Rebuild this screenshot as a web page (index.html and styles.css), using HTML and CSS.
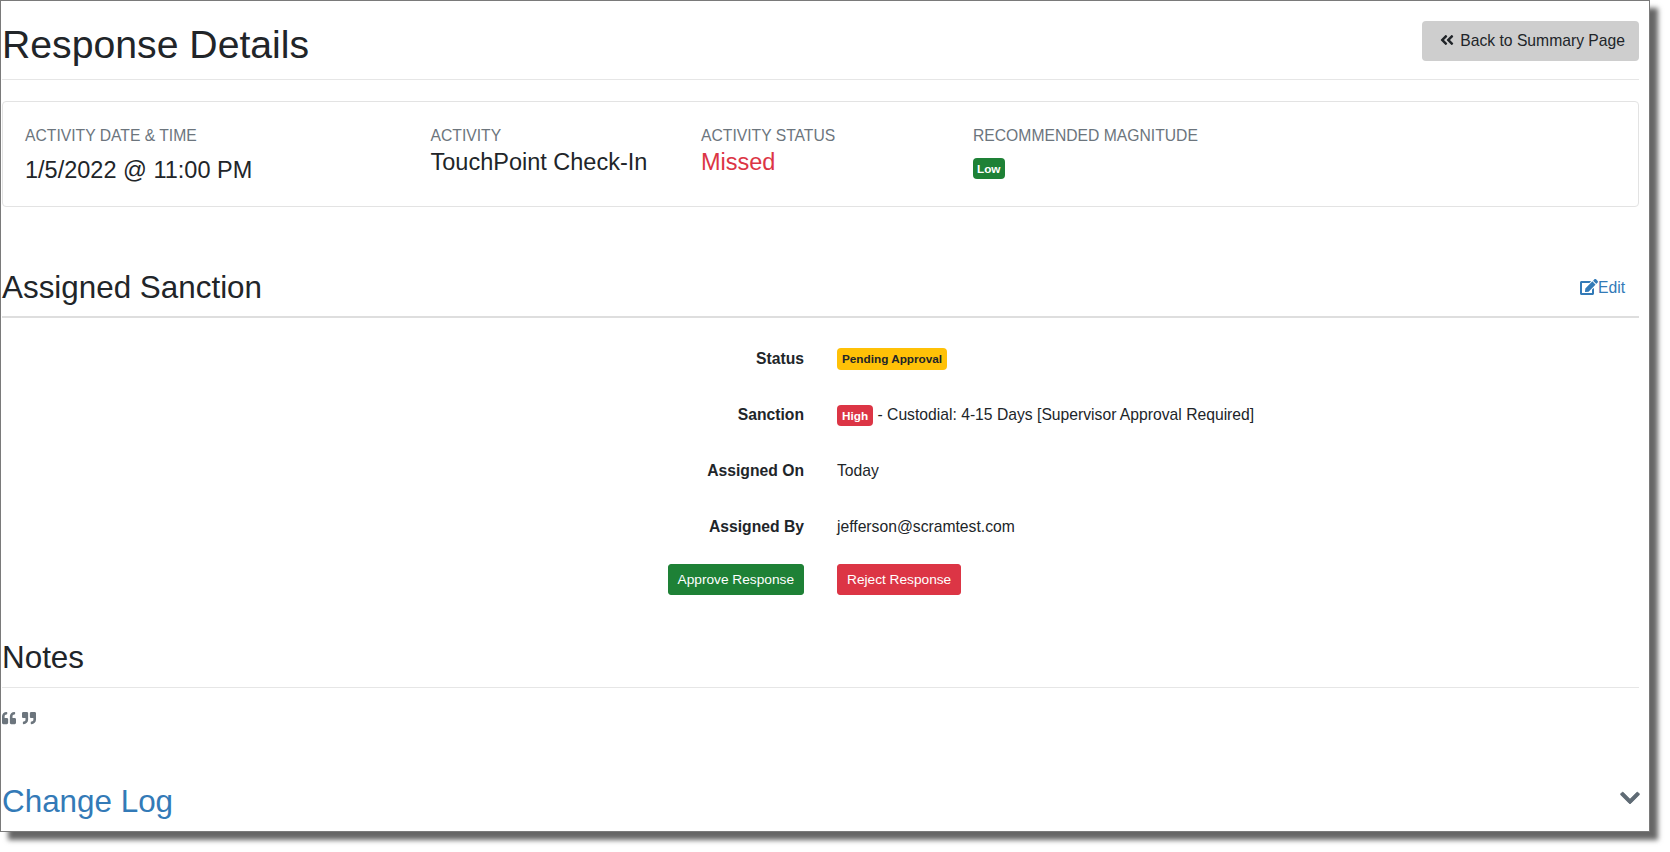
FILE: index.html

```html
<!DOCTYPE html>
<html lang="en">
<head>
  <meta charset="UTF-8">
  <title>Response Details</title>
  <link rel="stylesheet" href="styles.css">
</head>
<body>
  <div class="frame">

    <!-- Header -->
    <div class="page-header">
      <h1>Response Details</h1>
      <a class="btn btn-back" href="#">
        <svg class="icon-back" viewBox="0 0 448 512"><path d="M223.7 239l136-136c9.4-9.4 24.6-9.4 33.9 0l22.6 22.6c9.4 9.4 9.4 24.6 0 33.9L319.9 256l96.4 96.4c9.4 9.4 9.4 24.6 0 33.9L393.7 409c-9.4 9.4-24.6 9.4-33.9 0l-136-136c-9.5-9.4-9.5-24.6-.1-34zm-192 34l136 136c9.4 9.4 24.6 9.4 33.9 0l22.6-22.6c9.4-9.4 9.4-24.6 0-33.9L127.9 256l96.4-96.4c9.4-9.4 9.4-24.6 0-33.9L201.7 103c-9.4-9.4-24.6-9.4-33.9 0l-136 136c-9.5 9.4-9.5 24.6-.1 34z"/></svg>
        Back to Summary Page
      </a>
    </div>

    <!-- Activity summary -->
    <div class="summary-card">
      <div class="summary-col col-date">
        <div class="summary-label">Activity Date &amp; Time</div>
        <div class="summary-value value-date">1/5/2022 @ 11:00 PM</div>
      </div>
      <div class="summary-col col-activity">
        <div class="summary-label">Activity</div>
        <div class="summary-value">TouchPoint Check-In</div>
      </div>
      <div class="summary-col col-status">
        <div class="summary-label">Activity Status</div>
        <div class="summary-value text-danger">Missed</div>
      </div>
      <div class="summary-col">
        <div class="summary-label">Recommended Magnitude</div>
        <span class="badge badge-success badge-low">Low</span>
      </div>
    </div>

    <!-- Assigned sanction -->
    <div class="section-header section-sanction">
      <h2>Assigned Sanction</h2>
      <a class="edit-link" href="#">
        <svg class="icon-edit" viewBox="0 0 576 512"><path d="M402.6 83.2l90.2 90.2c3.8 3.8 3.8 10 0 13.8L274.4 405.6l-92.8 10.3c-12.4 1.4-22.9-9.1-21.5-21.5l10.3-92.8L388.8 83.2c3.8-3.8 10-3.8 13.8 0zm162-22.9l-48.8-48.8c-15.2-15.2-39.9-15.2-55.2 0l-35.4 35.4c-3.8 3.8-3.8 10 0 13.8l90.2 90.2c3.8 3.8 10 3.8 13.8 0l35.4-35.4c15.2-15.3 15.2-40 0-55.2zM384 346.2V448H64V128h229.8c3.2 0 6.2-1.3 8.5-3.5l40-40c7.6-7.6 2.2-20.5-8.5-20.5H48C21.5 64 0 85.5 0 112v352c0 26.5 21.5 48 48 48h352c26.5 0 48-21.5 48-48V306.2c0-10.7-12.9-16-20.5-8.5l-40 40c-2.2 2.3-3.5 5.3-3.5 8.5z"/></svg>Edit
      </a>
    </div>

    <div class="details">
      <div class="detail-label">Status</div>
      <div class="detail-value"><span class="badge badge-warning">Pending Approval</span></div>
      <div class="detail-label">Sanction</div>
      <div class="detail-value"><span class="badge badge-danger">High</span> - Custodial: 4-15 Days [Supervisor Approval Required]</div>
      <div class="detail-label">Assigned On</div>
      <div class="detail-value">Today</div>
      <div class="detail-label">Assigned By</div>
      <div class="detail-value">jefferson@scramtest.com</div>
      <div class="detail-action"><a class="btn btn-success" href="#">Approve Response</a></div>
      <div class="detail-action-right"><a class="btn btn-danger" href="#">Reject Response</a></div>
    </div>

    <!-- Notes -->
    <div class="section-header section-notes">
      <h2>Notes</h2>
    </div>
    <div class="notes-body">
      <svg class="icon-quote" viewBox="0 0 512 512"><path d="M464 256h-80v-64c0-35.3 28.7-64 64-64h8c13.3 0 24-10.7 24-24V56c0-13.3-10.7-24-24-24h-8c-88.4 0-160 71.6-160 160v240c0 26.5 21.5 48 48 48h128c26.5 0 48-21.5 48-48V304c0-26.5-21.5-48-48-48zm-288 0H96v-64c0-35.3 28.7-64 64-64h8c13.3 0 24-10.7 24-24V56c0-13.3-10.7-24-24-24h-8C71.6 32 0 103.6 0 192v240c0 26.5 21.5 48 48 48h128c26.5 0 48-21.5 48-48V304c0-26.5-21.5-48-48-48z"/></svg>
      <svg class="icon-quote" viewBox="0 0 512 512"><path d="M464 32H336c-26.5 0-48 21.5-48 48v128c0 26.5 21.5 48 48 48h80v64c0 35.3-28.7 64-64 64h-8c-13.3 0-24 10.7-24 24v48c0 13.3 10.7 24 24 24h8c88.4 0 160-71.6 160-160V80c0-26.5-21.5-48-48-48zm-288 0H48C21.5 32 0 53.5 0 80v128c0 26.5 21.5 48 48 48h80v64c0 35.3-28.7 64-64 64h-8c-13.3 0-24 10.7-24 24v48c0 13.3 10.7 24 24 24h8c88.4 0 160-71.6 160-160V80c0-26.5-21.5-48-48-48z"/></svg>
    </div>

    <!-- Change log -->
    <div class="changelog">
      <a class="changelog-link" href="#">Change Log</a>
      <svg class="icon-chevron" viewBox="0 0 448 512"><path d="M207.029 381.476L12.686 187.132c-9.373-9.373-9.373-24.569 0-33.941l22.667-22.667c9.357-9.357 24.522-9.375 33.901-.04L224 284.505l154.745-154.021c9.379-9.335 24.544-9.317 33.901.04l22.667 22.667c9.373 9.373 9.373 24.569 0 33.941L240.971 381.476c-9.373 9.372-24.569 9.372-33.942 0z"/></svg>
    </div>

  </div>
</body>
</html>
```

FILE: styles.css

```css
html, body {
  height: 852px;
}

body {
  font-family: "Liberation Sans", Arial, sans-serif;
  font-size: 15.7px;
  line-height: 24px;
  color: #212529;
  background: #fff;
  margin: 0;
  padding: 0;
  overflow: hidden;
}

a {
  text-decoration: none;
}

h1, h2 {
  margin: 0;
  font-weight: 400;
}

h1 {
  font-size: 39.2px;
  line-height: 48px;
}

h2 {
  font-size: 31.4px;
  line-height: 38px;
}

.frame {
  box-sizing: border-box;
  width: 1650px;
  height: 832px;
  border: 1px solid #7a7a7a;
  padding: 0 10px 0 1px;
  background: #fff;
  box-shadow: 8px 8px 5px rgba(0,0,0,0.6);
}

.page-header {
  display: flex;
  justify-content: space-between;
  align-items: flex-start;
  padding-top: 20px;
  height: 79px;
  box-sizing: border-box;
  border-bottom: 1px solid #e6e6e6;
}

.btn {
  display: inline-block;
  border-radius: 3px;
  font-size: 13.7px;
  line-height: 19px;
  padding: 5px 9px;
  color: #fff;
}

.btn-back {
  background: #cecece;
  color: #212529;
  font-size: 15.7px;
  line-height: 24px;
  padding: 8px 14px 8px 18px;
  border-radius: 4px;
}

.icon-back {
  width: 14px;
  height: 16px;
  fill: #212529;
  vertical-align: -2px;
  margin-right: 2px;
}

.btn-success {
  background: #1e8136;
  border: 1px solid #1e8136;
}

.btn-danger {
  background: #dc3545;
  border: 1px solid #dc3545;
}

.summary-card {
  display: flex;
  box-sizing: border-box;
  height: 106px;
  margin-top: 21px;
  padding: 22px 22px 0;
  border: 1px solid #e3e3e3;
  border-radius: 4px;
}

.summary-col {
  width: 270px;
}

.col-date {
  width: 405.5px;
}

.col-activity {
  width: 270.5px;
}

.col-status {
  width: 272px;
}

.summary-label {
  text-transform: uppercase;
  color: #6c757d;
  line-height: 24px;
}

.summary-value {
  font-size: 23.5px;
  line-height: 29px;
}

.value-date {
  margin-top: 8px;
}

.text-danger {
  color: #dc3545;
}

.badge {
  display: inline-block;
  font-size: 11.75px;
  font-weight: 700;
  line-height: 12px;
  padding: 5px 5px 4px;
  border-radius: 4px;
  color: #fff;
}

.badge-success {
  background: #1e8136;
}

.badge-low {
  margin-top: 10px;
  padding: 5px 4px 4px;
  vertical-align: top;
}

.badge-warning {
  background: #ffc107;
  color: #212529;
  padding: 5px 5px 5px;
  vertical-align: 1px;
}

.badge-danger {
  background: #dc3545;
  padding: 5px 5px 4px;
}

.section-header {
  display: flex;
  justify-content: space-between;
  align-items: center;
}

.section-sanction {
  margin-top: 49px;
  height: 62px;
  box-sizing: border-box;
  border-bottom: 2px solid #dedede;
  padding-right: 14px;
  padding-top: 3px;
}

.edit-link {
  color: #337ab7;
}

.icon-edit {
  width: 18px;
  height: 16px;
  fill: #337ab7;
  vertical-align: -2px;
}

.details {
  display: grid;
  grid-template-columns: 802px 1fr;
  column-gap: 33px;
  grid-auto-rows: 56px;
  margin-top: 16px;
}

.detail-label {
  font-weight: 700;
  text-align: right;
  padding-top: 13px;
}

.detail-value {
  padding-top: 13px;
}

.detail-action {
  text-align: right;
  padding-top: 6px;
}

.detail-action-right {
  padding-top: 6px;
}

.section-notes {
  margin-top: 22px;
  height: 52px;
  box-sizing: border-box;
  border-bottom: 1px solid #e6e6e6;
  padding-bottom: 7px;
}

.notes-body {
  display: flex;
  gap: 6px;
  margin-top: 23px;
  height: 20px;
}

.icon-quote {
  width: 14px;
  height: 14px;
  fill: #6c757d;
}

.changelog {
  display: flex;
  justify-content: space-between;
  align-items: center;
  margin-top: 52px;
}

.changelog-link {
  color: #337ab7;
  font-size: 31.4px;
  line-height: 38px;
}

.icon-chevron {
  width: 20px;
  height: 22px;
  fill: #5f6b75;
  stroke: #5f6b75;
  stroke-width: 20;
  margin: 0 -1px 8px 0;
}
```
